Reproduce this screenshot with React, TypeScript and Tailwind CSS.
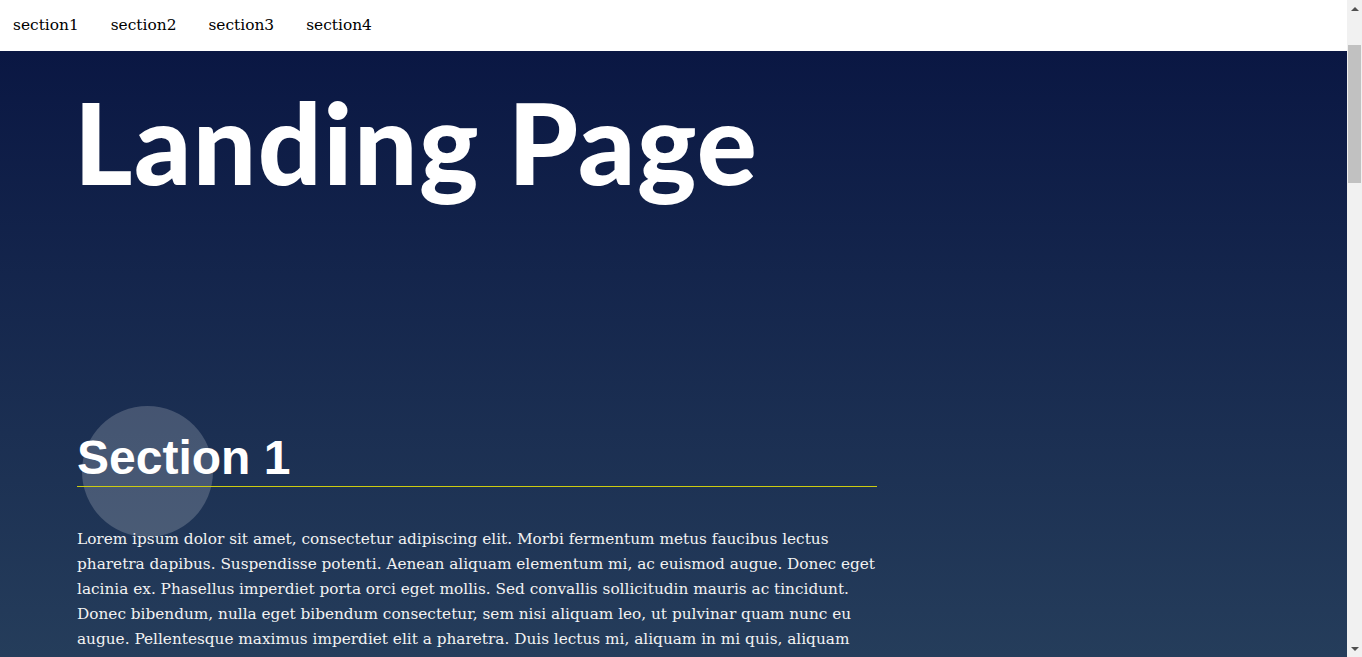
import React from 'react';

const sections = [1, 2, 3, 4];

const loremA =
  'Lorem ipsum dolor sit amet, consectetur adipiscing elit. Morbi fermentum metus faucibus lectus pharetra dapibus. Suspendisse potenti. Aenean aliquam elementum mi, ac euismod augue. Donec eget lacinia ex. Phasellus imperdiet porta orci eget mollis. Sed convallis sollicitudin mauris ac tincidunt. Donec bibendum, nulla eget bibendum consectetur, sem nisi aliquam leo, ut pulvinar quam nunc eu augue. Pellentesque maximus imperdiet elit a pharetra. Duis lectus mi, aliquam in mi quis, aliquam porttitor lacus. Morbi a tincidunt felis. Sed leo nunc, pharetra et elementum non, faucibus vitae elit. Integer nec libero venenatis libero ultricies molestie semper in tellus. Sed congue et odio sed euismod.';

const loremB =
  'Aliquam a convallis justo. Vivamus venenatis, erat eget pulvinar gravida, ipsum lacus aliquet velit, vel luctus diam ipsum a diam. Cras eu tincidunt arcu, vitae rhoncus purus. Vestibulum fermentum consectetur porttitor. Suspendisse imperdiet porttitor tortor, eget elementum tortor mollis non.';

const NavBar: React.FC = () => (
  <header className="fixed top-0 left-0 right-[15px] z-10 bg-white">
    <nav>
      <ul className="-ml-[3px] flex font-['DejaVu_Serif',serif] text-[15.4px] leading-[19px] text-black">
        {sections.map((n) => (
          <li key={n}>
            <a href={`#section${n}`} className="block px-4 py-4">
              section{n}
            </a>
          </li>
        ))}
      </ul>
    </nav>
  </header>
);

// classic browser scrollbar, drawn over the page edge
const ScrollBar: React.FC = () => (
  <div className="fixed top-0 right-0 bottom-0 z-20 flex w-[15px] flex-col items-center bg-[#f1f1f1]">
    <div className="flex h-[17px] w-full items-center justify-center">
      <div className="h-0 w-0 border-x-[4px] border-b-[4px] border-x-transparent border-b-[#505050]" />
    </div>
    <div className="mt-[28px] h-[138px] w-[13px] bg-[#c1c1c1]" />
    <div className="flex-1" />
    <div className="flex h-[17px] w-full items-center justify-center">
      <div className="h-0 w-0 border-x-[4px] border-t-[4px] border-x-transparent border-t-[#505050]" />
    </div>
  </div>
);

const Section: React.FC<{ n: number }> = ({ n }) => (
  <section id={`section${n}`} className="pl-[77px] pb-[64px]">
    <div className="relative w-[800px]">
      {n % 2 === 1 && (
        <div className="absolute left-[5px] -top-[24px] h-[131px] w-[131px] rounded-full bg-white/[0.19]" />
      )}
      <h2 className="relative font-['Liberation_Sans',sans-serif] text-[48px] font-bold leading-[56px] text-white">
        Section {n}
      </h2>
      <div className="relative h-px bg-[#cccc11]" />
      <div className="relative mt-[40px]">
        <p className="font-['DejaVu_Serif',serif] text-[15.3px] leading-[25px] text-[#f2f2f2]">{loremA}</p>
        <p className="mt-4 font-['DejaVu_Serif',serif] text-[15.3px] leading-[25px] text-[#f2f2f2]">{loremB}</p>
      </div>
    </div>
  </section>
);

export default function App() {
  return (
    <div className="min-h-screen bg-[linear-gradient(180deg,#0a1743_0px,#0a1743_51px,#253d5b_657px,#4f8a86_2200px,#88cbab_2900px)]">
      <NavBar />
      <ScrollBar />
      <main className="pt-[51px]">
        <h1 className="ml-[74px] mt-[24px] mb-[221px] font-['Lato',sans-serif] text-[112px] font-black leading-[134px] tracking-[1.5px] text-white">
          Landing Page
        </h1>
        {sections.map((n) => (
          <Section key={n} n={n} />
        ))}
      </main>
    </div>
  );
}
